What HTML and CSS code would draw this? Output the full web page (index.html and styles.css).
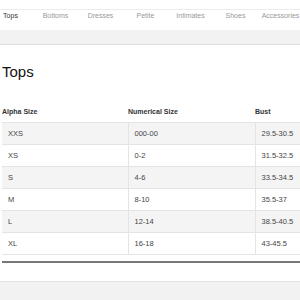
FILE: index.html
```html
<!DOCTYPE html>
<html lang="en">
<head>
    <meta charset="UTF-8">
    <meta name="viewport" content="width=device-width, initial-scale=1.0">
    <title>Size Chart - Tops</title>
    <link rel="stylesheet" href="styles.css">
</head>
<body>
    <nav class="tabs">
        <ul class="tab-list">
            <li class="active">Tops</li>
            <li>Bottoms</li>
            <li>Dresses</li>
            <li>Petite</li>
            <li>Intimates</li>
            <li>Shoes</li>
            <li>Accessories</li>
        </ul>
    </nav>
    <div class="sub-bar"></div>

    <div class="chart">
        <h1>Tops</h1>
        <table class="size-table">
            <thead>
                <tr>
                    <th>Alpha Size</th>
                    <th>Numerical Size</th>
                    <th>Bust</th>
                </tr>
            </thead>
            <tbody>
                <tr><td>XXS</td><td>000-00</td><td>29.5-30.5</td></tr>
                <tr><td>XS</td><td>0-2</td><td>31.5-32.5</td></tr>
                <tr><td>S</td><td>4-6</td><td>33.5-34.5</td></tr>
                <tr><td>M</td><td>8-10</td><td>35.5-37</td></tr>
                <tr><td>L</td><td>12-14</td><td>38.5-40.5</td></tr>
                <tr><td>XL</td><td>16-18</td><td>43-45.5</td></tr>
            </tbody>
        </table>
        <div class="chart-end"></div>
    </div>

    <div class="footer-bar"></div>
</body>
</html>
```

FILE: styles.css
```css
:root {
    --text: #333;
    --text-light: #999;
    --band: #f2f2f2;
    --line: #e4e4e4;
    --row-alt: #f4f4f4;
}

* {
    margin: 0;
    padding: 0;
    box-sizing: border-box;
}

body {
    font-family: "Liberation Sans", Arial, sans-serif;
    color: var(--text);
    background: #fff;
    overflow: hidden;
}

.tabs {
    margin-top: 9px;
    border-top: 1px solid #ececec;
    height: 21px;
    overflow: hidden;
}

.tab-list {
    display: flex;
    list-style: none;
    margin-left: -12px;
    padding-top: 2px;
}

.tab-list li {
    flex: 0 0 45px;
    text-align: center;
    font-size: 7px;
    line-height: 8px;
    color: var(--text-light);
    white-space: nowrap;
}

.tab-list li.active {
    color: var(--text);
}

.sub-bar {
    height: 15px;
    background: var(--band);
    border-bottom: 1px solid #dedede;
}

.chart {
    padding-left: 2px;
}

h1 {
    font-size: 15px;
    font-weight: 400;
    line-height: 18px;
    margin-top: 18px;
    color: #111;
}

.size-table {
    width: 100%;
    table-layout: fixed;
    border-collapse: collapse;
    margin-top: 23px;
    font-size: 7.5px;
}

.size-table th {
    text-align: left;
    font-size: 7px;
    font-weight: 700;
    height: 18px;
    vertical-align: middle;
    padding-bottom: 2px;
    white-space: nowrap;
}

.size-table th:nth-child(1) {
    width: 126px;
}

.size-table th:nth-child(2) {
    width: 127px;
}

.size-table td {
    height: 22px;
    padding: 0 6px;
    color: #444;
    border-top: 1px solid var(--line);
    white-space: nowrap;
}

.size-table td + td {
    border-left: 1px solid var(--line);
}

.size-table tbody tr:nth-child(odd) {
    background: var(--row-alt);
}

.size-table tbody tr:last-child td {
    border-bottom: 1px solid var(--line);
}

.chart-end {
    margin-top: 6px;
    border-top: 2px solid #777;
}

.footer-bar {
    margin-top: 18px;
    height: 20px;
    background: var(--band);
    border-top: 1px solid #e2e2e2;
}
```
